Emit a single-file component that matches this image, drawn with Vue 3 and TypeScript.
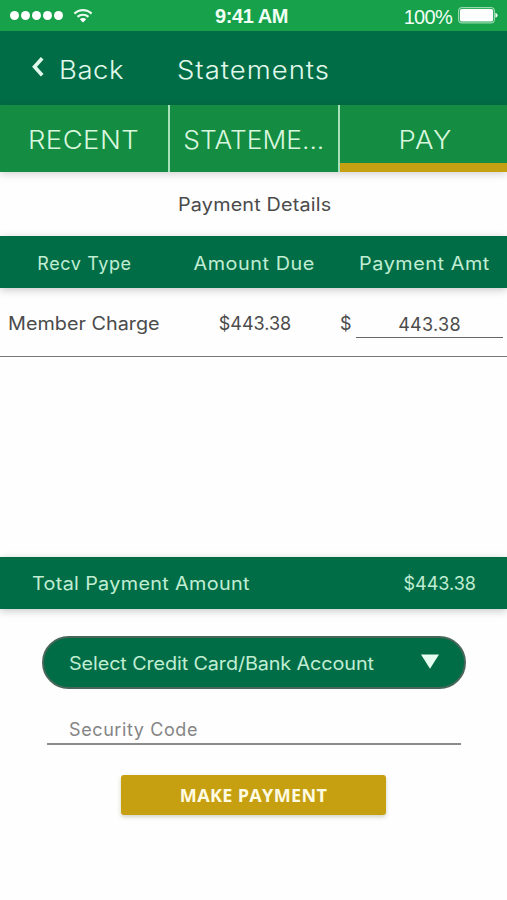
<script setup lang="ts">
import { ref } from 'vue'

interface Tab {
  id: string
  label: string
}

interface Charge {
  type: string
  due: string
  payment: string
}

const tabs: Tab[] = [
  { id: 'recent', label: 'RECENT' },
  { id: 'statements', label: 'STATEME...' },
  { id: 'pay', label: 'PAY' },
]
const activeTab = ref<string>('pay')
const charges = ref<Charge[]>([{ type: 'Member Charge', due: '$443.38', payment: '443.38' }])
</script>

<template>
  <div class="screen">
    <div class="status">
      <div class="signal">
        <i v-for="n in 5" :key="n" class="dot"></i>
        <svg class="wifi" width="20" height="16" viewBox="0 0 20 16">
          <path d="M1.4 5.6C6.2.9 13.800.9 18.600 5.600" />
          <path d="M4.500 8.900C7.600 6 12.400 6 15.500 8.900" />
          <path class="fan" d="M6.800 11.300C8.600 9.700 11.400 9.700 13.200 11.300L10 14.600Z" />
        </svg>
      </div>
      <span class="time">9:41 AM</span>
      <div class="power">
        <span class="percent">100%</span>
        <svg width="40" height="17" viewBox="0 0 40 17">
          <rect x=".7" y=".7" width="35.600" height="15.200" rx="2.500" fill="none" stroke="#b9e8c6" stroke-width="1" />
          <rect x="2" y="2" width="33" height="12.600" rx="1.500" fill="#fff" />
          <path d="M37.400 5.800Q39.600 6.300 39.600 8.300T37.400 10.800Z" fill="#e9fbee" />
        </svg>
      </div>
    </div>

    <header class="header">
      <svg class="chevron" width="13" height="20" viewBox="0 0 13 20">
        <path d="M11.200 1.200L3.500 9.700L11.200 18.200" />
      </svg>
      <span class="back wide">Back</span>
      <h1 class="title wide">Statements</h1>
    </header>

    <nav class="tabs">
      <button
        v-for="tab in tabs"
        :key="tab.id"
        class="tab"
        :class="[tab.id, { active: tab.id === activeTab }]"
        @click="activeTab = tab.id"
      >
        <span>{{ tab.label }}</span>
      </button>
    </nav>

    <h2 class="caption"><span class="wide center">Payment Details</span></h2>

    <div class="bar columns">
      <span class="h-type">Recv Type</span>
      <span class="wide center">Amount Due</span>
      <span class="wide center">Payment Amt</span>
    </div>

    <div class="list">
      <div v-for="charge in charges" :key="charge.type" class="row">
        <span class="type"><span class="wide">{{ charge.type }}</span></span>
        <span class="due">{{ charge.due }}</span>
        <span class="currency">$</span>
        <input v-model="charge.payment" class="amount" />
      </div>
    </div>

    <div class="bar total">
      <span class="total-label wide">Total Payment Amount</span>
      <span class="total-value">$443.38</span>
    </div>

    <div class="form">
      <button class="select">
        <span class="wide">Select Credit Card/Bank Account</span>
        <svg width="18" height="15" viewBox="0 0 18 15"><path d="M0 .4H18L9 14.800Z" fill="#e6fff1" /></svg>
      </button>
      <input class="code" placeholder="Security Code" />
      <button class="submit">MAKE PAYMENT</button>
    </div>
  </div>
</template>

<style>
body {
  margin: 0;
  background: #fefefe;
}
</style>

<style scoped>
.screen {
  display: flex;
  flex-direction: column;
  width: 507px;
  height: 900px;
  overflow: hidden;
  background: #fefefe;
  color: #4b4b4b;
  font-family: Inter, 'Liberation Sans', sans-serif;
  font-size: 18px;
  line-height: 24px;
  white-space: nowrap;
}
.screen * {
  box-sizing: border-box;
}
button,
input {
  margin: 0;
  padding: 0;
  border: 0;
  border-radius: 0;
  background: none;
  color: inherit;
  font: inherit;
  outline: none;
}
/* widened letterforms for labels */
.wide {
  display: inline-block;
  transform: scaleX(1.1);
  transform-origin: left center;
}
.wide.center {
  transform-origin: center;
}
.status {
  display: grid;
  grid-template-columns: 1fr auto 1fr;
  align-items: center;
  flex: none;
  height: 31px;
  padding: 0 9px 0 10px;
  background: #17a14b;
  color: #f0fff4;
  font-family: 'Liberation Sans', sans-serif;
}
.signal {
  display: flex;
  align-items: center;
  gap: 2px;
}
.dot {
  width: 9px;
  height: 9px;
  border-radius: 50%;
  background: #fff;
}
.wifi {
  margin-left: 8px;
  fill: none;
  stroke: #e9fbee;
  stroke-width: 2.2;
}
.wifi .fan {
  fill: #fff;
  stroke: none;
}
.time {
  padding: 1px 5px 0 0;
  font-size: 20px;
  font-weight: 700;
  letter-spacing: -0.4px;
}
.power {
  display: flex;
  align-items: center;
  justify-content: flex-end;
  gap: 6px;
}
.percent {
  padding-top: 2px;
  font-size: 20px;
  letter-spacing: -0.7px;
}
.header {
  display: flex;
  align-items: center;
  flex: none;
  height: 74px;
  padding: 3px 0 0 31px;
  background: #016d46;
  color: #e0f9eb;
  font-size: 25px;
}
.chevron {
  margin-top: -6px;
  fill: none;
  stroke: #e0f9eb;
  stroke-width: 3.6;
}
.back {
  width: 118px;
  margin-left: 15px;
  font-weight: 300;
  letter-spacing: 0.5px;
}
.title {
  margin: 0;
  font-size: 25px;
  font-weight: 300;
  letter-spacing: 0.9px;
}
.tabs {
  display: grid;
  grid-template-columns: 169.5px 170.5px 167px;
  flex: none;
  height: 67px;
  background: #148c41;
  color: #d9f7df;
  box-shadow: 0 2px 8px rgba(0, 0, 0, 0.18);
}
.tab {
  border-right: 2px solid #a8e0ba;
  padding-top: 3px;
  font-size: 25px;
  font-weight: 300;
  letter-spacing: 0.4px;
}
.tab span {
  display: inline-block;
  transform: scaleX(1.1);
}
.tab.statements {
  letter-spacing: 0;
}
.tab.statements span {
  transform: scaleX(1.055);
}
.tab.pay {
  padding-left: 4px;
  letter-spacing: 1.2px;
}
.tab:last-child {
  border-right: 0;
}
.tab.active {
  box-shadow: inset 0 -9px #c5a012;
}
.caption {
  flex: none;
  height: 64px;
  margin: 0;
  padding: 21px 0 0 2px;
  font-size: 18px;
  font-weight: 400;
  letter-spacing: 0.15px;
  text-align: center;
}
.bar {
  flex: none;
  height: 52px;
  background: #016d46;
  color: #c0edd3;
  box-shadow: 0 2px 8px rgba(0, 0, 0, 0.22);
}
.columns {
  display: grid;
  grid-template-columns: 169px 170px 171px;
  align-items: center;
  justify-items: center;
  padding-top: 3px;
  letter-spacing: 0.5px;
}
.h-type {
  letter-spacing: 0.6px;
}
.list {
  flex: none;
  height: 269px;
}
.row {
  display: grid;
  grid-template-columns: 170px 170px 16px 147px;
  height: 69px;
  padding-top: 24px;
  border-bottom: 1px solid #777;
}
.type {
  padding-left: 8px;
}
.due {
  text-align: center;
}
.amount {
  width: 147px;
  height: 26px;
  border-bottom: 1px solid #666;
  letter-spacing: 0.3px;
  text-align: center;
}
.total {
  display: flex;
  align-items: center;
  justify-content: space-between;
  padding: 2px 31px 0 32px;
}
.total-label {
  letter-spacing: 0.3px;
}
.form {
  display: flex;
  flex-direction: column;
  align-items: flex-start;
  padding: 27px 42px 0;
}
.select {
  display: flex;
  align-items: center;
  justify-content: space-between;
  width: 424px;
  height: 53px;
  padding: 2px 25px 0 25px;
  border: 2px solid #48675a;
  border-radius: 27px;
  background: #016d46;
  color: #c0edd3;
  letter-spacing: -0.1px;
}
.select svg {
  margin-top: -5px;
}
.code {
  width: 414px;
  height: 29px;
  margin: 27px 0 0 5px;
  padding-left: 22px;
  border-bottom: 2px solid #8c8c8c;
  letter-spacing: 0.6px;
}
.code::placeholder {
  color: #858585;
  opacity: 1;
}
.submit {
  width: 265px;
  height: 40px;
  margin: 30px 0 0 79px;
  border-radius: 3px;
  background: #c6a011;
  color: #fffbe2;
  font-family: 'Open Sans', sans-serif;
  font-weight: 700;
  letter-spacing: 0.35px;
  box-shadow: 0 2px 4px rgba(80, 80, 20, 0.25);
}
</style>
